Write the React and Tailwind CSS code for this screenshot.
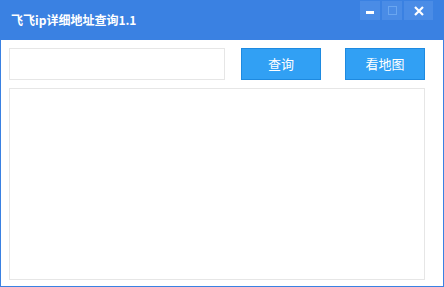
import React from 'react'

const font = { fontFamily: '"Microsoft YaHei", "Noto Sans CJK SC", sans-serif' }

export default function App() {
    return (
        <div className="w-[444px] h-[287px] flex flex-col bg-white border border-[#3a81e2] border-t-0" style={font}>
            <div className="h-[40px] bg-[#3a81e2] flex items-start justify-between -mx-px">
                <div className="pl-[11px] pt-[11px] text-white text-[12px] font-bold leading-[18px]">飞飞ip详细地址查询1.1</div>
                <div className="flex gap-[2px] pt-[1px] pr-[11px]">
                    <div className="w-[20px] h-[19px] bg-[#4a8ce6] flex items-center justify-center">
                        <div className="w-[8px] h-[3px] bg-white mt-[3px]" />
                    </div>
                    <div className="w-[20px] h-[19px] bg-[#4a8ce6] flex items-center justify-center">
                        <div className="w-[9px] h-[9px] border border-[#6aa6f0]" />
                    </div>
                    <div className="w-[29px] h-[19px] bg-[#4a8ce6] flex items-center justify-center">
                        <svg width="10" height="10" viewBox="0 0 10 10">
                            <path d="M1 1L9 9M9 1L1 9" stroke="white" strokeWidth="2.2" />
                        </svg>
                    </div>
                </div>
            </div>
            <div className="flex items-start pt-[8px] pl-[8px]">
                <input className="w-[216px] h-[32px] border border-[#e6e6e6] outline-none px-2 text-sm" />
                <button className="ml-[16px] w-[80px] h-[32px] bg-[#31a0f4] border border-[#1e8ae0] text-white text-[13px]">查询</button>
                <button className="ml-[24px] w-[80px] h-[32px] bg-[#31a0f4] border border-[#1e8ae0] text-white text-[13px]">看地图</button>
            </div>
            <div className="ml-[8px] mt-[8px] w-[416px] h-[192px] border border-[#e6e6e6]" />
        </div>
    )
}
